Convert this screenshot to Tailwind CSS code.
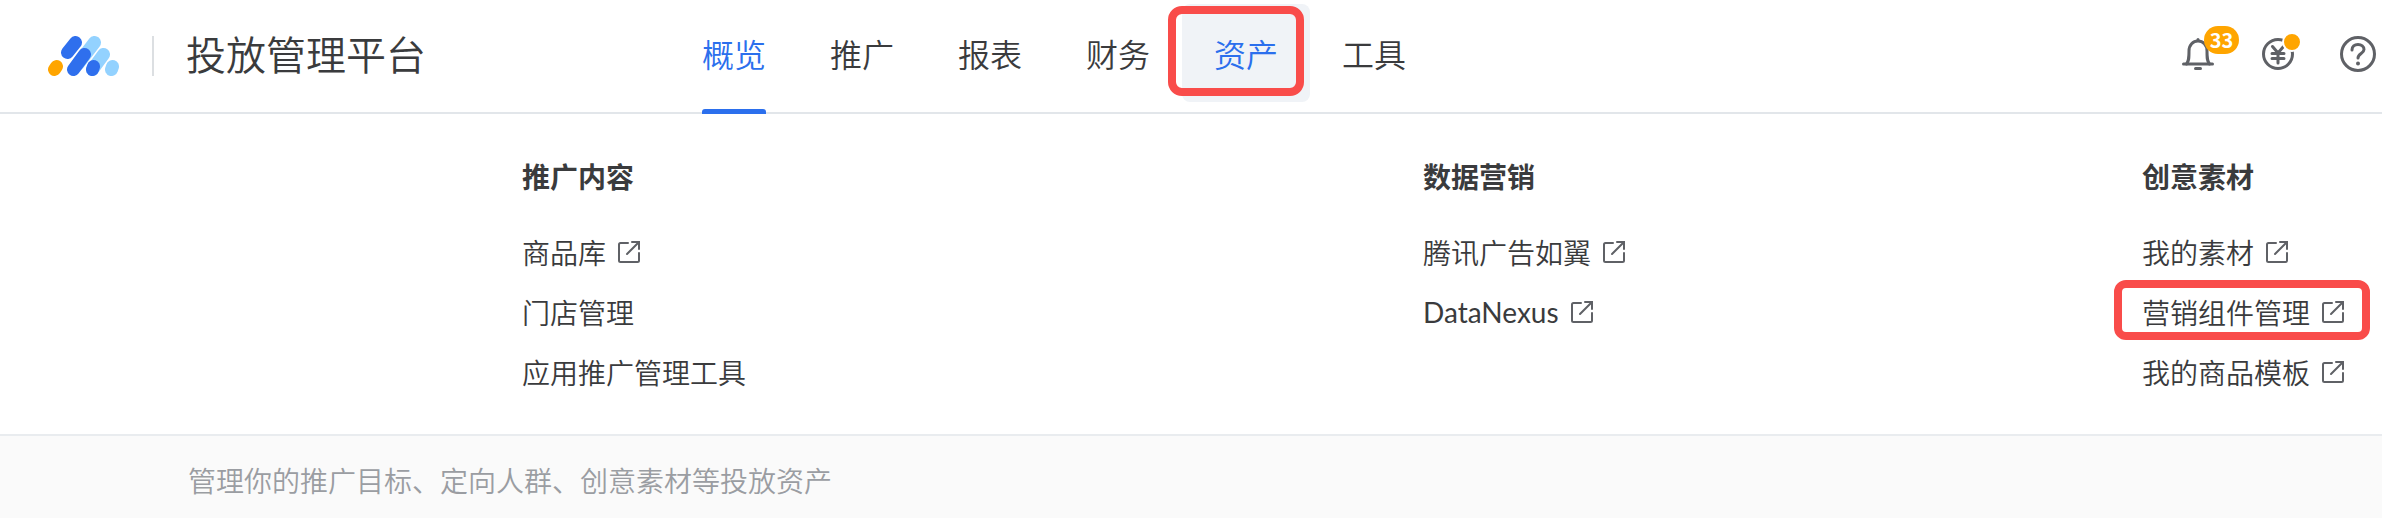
<!DOCTYPE html>
<html lang="zh-CN">
<head>
    <meta charset="UTF-8">
    <title>投放管理平台</title>
    <script src="https://cdn.jsdelivr.net/npm/@tailwindcss/browser@4"></script>
</head>
<body class="relative w-[2382px] h-[518px] overflow-hidden bg-white text-[#3a3b3d] font-[350] font-['Noto_Sans_CJK_SC','Noto_Sans',sans-serif]">

    <!-- Topo -->
    <header class="flex items-center h-[114px] border-b-2 border-[#e2e6ea] pl-[48px] pr-[6px]">
        <svg class="w-[72px] h-[40px]" viewBox="0 0 72 40" fill="none" stroke-linecap="round" stroke-width="13">
            <path d="M46.500 6.500 L30 28" stroke="#93d2ff"/>
            <path d="M55.500 18.500 L44.500 33.500" stroke="#93d2ff"/>
            <path d="M63.500 33.500 L64.500 30.500" stroke="#93d2ff"/>
            <path d="M6.500 33.500 L8.500 30.500" stroke="#ffa500"/>
            <path d="M19.500 16.500 L27.500 6.500" stroke="#2f6fed"/>
            <path d="M25.500 33.500 L36.500 18.500" stroke="#2f6fed"/>
            <path d="M44.500 33.500 L45.500 30.500" stroke="#2f6fed"/>
        </svg>
        <div class="w-[2px] h-[40px] bg-[#dcdfe2] ml-[32px]"></div>
        <div class="ml-[32px] text-[40px] leading-[56px] -mt-[6px]">投放管理平台</div>

        <nav class="flex h-full ml-[244px] text-[32px]">
            <a class="relative flex items-center px-8 pb-[6px] text-[#2b6fed]">概览
                <span class="absolute left-8 right-8 bottom-[-2px] h-[5px] rounded-t-[3px] bg-[#2b6fed]"></span>
            </a>
            <a class="flex items-center px-8 pb-[6px]">推广</a>
            <a class="flex items-center px-8 pb-[6px]">报表</a>
            <a class="flex items-center px-8 pb-[6px]">财务</a>
            <a class="relative flex items-center px-8 pb-[6px] text-[#2b6fed]">
                <span class="absolute left-0 right-0 top-[4px] bottom-[10px] rounded-[8px] bg-[#f0f3f7]"></span>
                <span class="relative">资产</span>
            </a>
            <a class="flex items-center px-8 pb-[6px]">工具</a>
        </nav>

        <div class="flex items-center ml-auto -mt-[4px]">
            <div class="relative w-[32px] h-[32px]">
                <svg class="w-[32px] h-[32px]" viewBox="0 0 32 32" fill="none" stroke="#5f6166" stroke-width="3" stroke-linecap="round">
                    <path d="M1.500 26 H30.500"/>
                    <path d="M4.500 26 C7 23 7 20 7 13 C7 7 11 3 16 3 C21 3 25 7 25 13 C25 20 25 23 27.500 26"/>
                    <path d="M16 1.500 V2.500"/>
                    <path d="M13.500 30.500 H18.500"/>
                </svg>
                <span class="absolute left-[22px] top-[-12px] flex items-center justify-center w-[35px] h-[28px] rounded-[14px] bg-[#ffa500] text-white text-[20px] font-bold leading-none">33</span>
            </div>
            <div class="relative w-[32px] h-[32px] ml-[48px]">
                <svg class="w-[32px] h-[32px]" viewBox="0 0 32 32" fill="none" stroke="#5f6166" stroke-width="3" stroke-linecap="round">
                    <circle cx="16" cy="16" r="14.500"/>
                    <path d="M10.500 8.500 L16 15 L21.500 8.500 M10 15.500 H22 M10 20.500 H22 M16 15 V25"/>
                </svg>
                <span class="absolute left-[20px] top-[-6px] w-[20px] h-[20px] rounded-full bg-[#ffa500] border-2 border-white"></span>
            </div>
            <svg class="w-[36px] h-[36px] ml-[46px]" viewBox="0 0 36 36" fill="none" stroke="#5f6166" stroke-width="3" stroke-linecap="round">
                <circle cx="18" cy="18" r="16.500"/>
                <path d="M12 14 C12 10.500 14.500 8.500 18 8.500 C21.500 8.500 24 10.500 24 13.500 C24 17.500 18 17.500 18 22"/>
                <path d="M18 27.500 V27.600" stroke-width="4"/>
            </svg>
        </div>
    </header>

    <!-- Menu -->
    <main class="flex h-[320px] pl-[522px] text-[28px] leading-[60px] border-b-2 border-[#e9ecef] box-content overflow-hidden">
        <section class="w-[901px] pt-[32px]">
            <h2 class="font-bold mb-[16px]">推广内容</h2>
            <a class="flex items-center">商品库
                <svg class="w-[22px] h-[22px] ml-[12px]" viewBox="0 0 22 22" fill="none" stroke="#5f6166" stroke-width="2" stroke-linecap="round"><path d="M10 2 H2.500 A1.500 1.500 0 0 0 1 3.500 V19.500 A1.500 1.500 0 0 0 2.500 21 H19.500 A1.500 1.500 0 0 0 21 19.500 V12"/><path d="M9 13 L20.500 1.500 M14 1 H21 V8"/></svg>
            </a>
            <a class="flex items-center">门店管理</a>
            <a class="flex items-center">应用推广管理工具</a>
        </section>
        <section class="w-[719px] pt-[32px]">
            <h2 class="font-bold mb-[16px]">数据营销</h2>
            <a class="flex items-center">腾讯广告如翼
                <svg class="w-[22px] h-[22px] ml-[12px]" viewBox="0 0 22 22" fill="none" stroke="#5f6166" stroke-width="2" stroke-linecap="round"><path d="M10 2 H2.500 A1.500 1.500 0 0 0 1 3.500 V19.500 A1.500 1.500 0 0 0 2.500 21 H19.500 A1.500 1.500 0 0 0 21 19.500 V12"/><path d="M9 13 L20.500 1.500 M14 1 H21 V8"/></svg>
            </a>
            <a class="flex items-center font-['Lato',sans-serif] font-normal">DataNexus
                <svg class="w-[22px] h-[22px] ml-[12px]" viewBox="0 0 22 22" fill="none" stroke="#5f6166" stroke-width="2" stroke-linecap="round"><path d="M10 2 H2.500 A1.500 1.500 0 0 0 1 3.500 V19.500 A1.500 1.500 0 0 0 2.500 21 H19.500 A1.500 1.500 0 0 0 21 19.500 V12"/><path d="M9 13 L20.500 1.500 M14 1 H21 V8"/></svg>
            </a>
        </section>
        <section class="w-[240px] pt-[32px]">
            <h2 class="font-bold mb-[16px]">创意素材</h2>
            <a class="flex items-center">我的素材
                <svg class="w-[22px] h-[22px] ml-[12px]" viewBox="0 0 22 22" fill="none" stroke="#5f6166" stroke-width="2" stroke-linecap="round"><path d="M10 2 H2.500 A1.500 1.500 0 0 0 1 3.500 V19.500 A1.500 1.500 0 0 0 2.500 21 H19.500 A1.500 1.500 0 0 0 21 19.500 V12"/><path d="M9 13 L20.500 1.500 M14 1 H21 V8"/></svg>
            </a>
            <a class="flex items-center">营销组件管理
                <svg class="w-[22px] h-[22px] ml-[12px]" viewBox="0 0 22 22" fill="none" stroke="#5f6166" stroke-width="2" stroke-linecap="round"><path d="M10 2 H2.500 A1.500 1.500 0 0 0 1 3.500 V19.500 A1.500 1.500 0 0 0 2.500 21 H19.500 A1.500 1.500 0 0 0 21 19.500 V12"/><path d="M9 13 L20.500 1.500 M14 1 H21 V8"/></svg>
            </a>
            <a class="flex items-center">我的商品模板
                <svg class="w-[22px] h-[22px] ml-[12px]" viewBox="0 0 22 22" fill="none" stroke="#5f6166" stroke-width="2" stroke-linecap="round"><path d="M10 2 H2.500 A1.500 1.500 0 0 0 1 3.500 V19.500 A1.500 1.500 0 0 0 2.500 21 H19.500 A1.500 1.500 0 0 0 21 19.500 V12"/><path d="M9 13 L20.500 1.500 M14 1 H21 V8"/></svg>
            </a>
        </section>
    </main>

    <footer class="h-[82px] pl-[188px] pt-[24px] bg-[#fafafa] text-[28px] leading-[40px] text-[#9a9da2]">管理你的推广目标、定向人群、创意素材等投放资产</footer>

    <!-- Marcações vermelhas por cima da tela -->
    <div class="absolute left-[1168px] top-[6px] w-[136px] h-[90px] rounded-[14px] border-[8px] border-[#f94c4a]"></div>
    <div class="absolute left-[2114px] top-[280px] w-[256px] h-[60px] rounded-[12px] border-[8px] border-[#f94c4a]"></div>
</body>
</html>
